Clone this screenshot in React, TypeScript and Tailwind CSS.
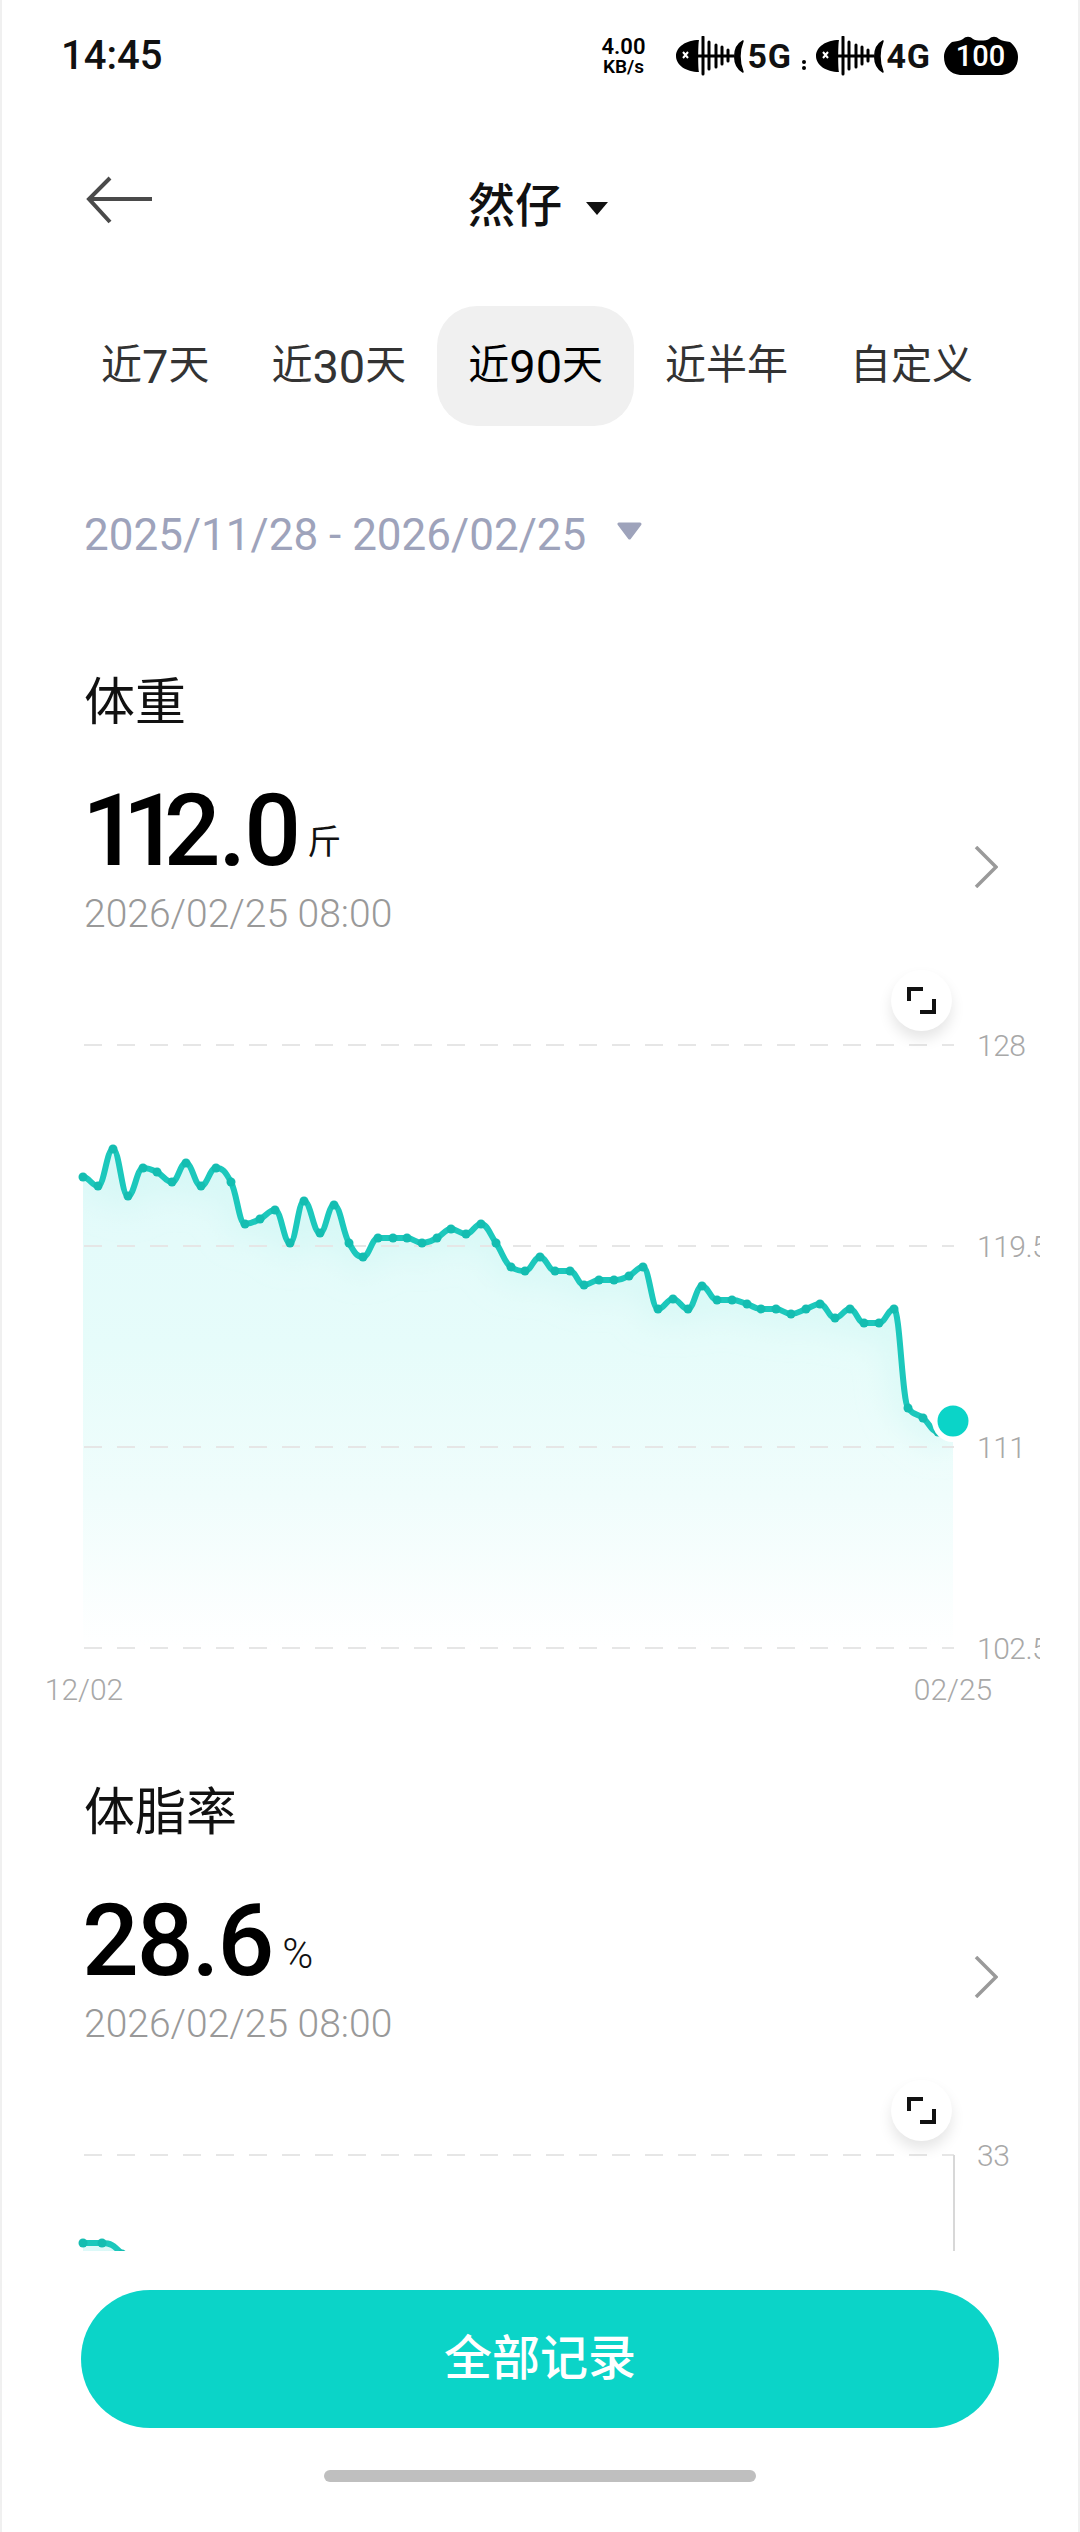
import React from "react";

type Pt = [number, number];

// page x, page y of every weight reading, read off the chart
const WEIGHT: Pt[] = [
  [83, 1176], [98, 1185], [113, 1148], [128, 1195], [143, 1167], [157, 1171], [172, 1181], [186, 1162],
  [201, 1185], [216, 1167], [231, 1181], [245, 1223], [260, 1218], [275, 1209], [290, 1242], [304, 1200],
  [320, 1232], [334, 1204], [349, 1242], [363, 1256], [378, 1237], [393, 1237], [407, 1237], [422, 1242],
  [437, 1237], [451, 1228], [466, 1233], [481, 1223], [496, 1242], [511, 1266], [525, 1270], [540, 1256],
  [555, 1270], [570, 1270], [584, 1284], [599, 1279], [614, 1279], [629, 1275], [643, 1266], [658, 1308],
  [673, 1298], [688, 1308], [702, 1285], [717, 1299], [732, 1299], [747, 1303], [761, 1308], [776, 1308],
  [791, 1313], [806, 1308], [820, 1303], [835, 1317], [850, 1308], [864, 1322], [879, 1322], [894, 1308],
  [908, 1407], [923, 1417], [938, 1431],
];

const FAT: Pt[] = [[83, 2243], [102, 2243], [122, 2254], [140, 2290]];

// smooth curve, flat at every peak and dip
function curve(pts: Pt[]) {
  const slope = (a: Pt, b: Pt) => (b[1] - a[1]) / (b[0] - a[0]);
  const t = pts.map((p, i) => {
    if (i === 0 || i === pts.length - 1) return 0;
    const s0 = slope(pts[i - 1], p);
    const s1 = slope(p, pts[i + 1]);
    if (s0 * s1 <= 0) return 0;
    const sign = s0 > 0 ? 1 : -1;
    return sign * Math.min(Math.abs(s0) * 2, Math.abs(s1) * 2, Math.abs(s0 + s1) / 2);
  });
  let d = `M${pts[0][0]} ${pts[0][1]}`;
  for (let i = 1; i < pts.length; i++) {
    const [x0, y0] = pts[i - 1];
    const [x1, y1] = pts[i];
    const h = (x1 - x0) * 0.42;
    d += `C${x0 + h} ${y0 + h * t[i - 1]} ${x1 - h} ${y1 - h * t[i]} ${x1} ${y1}`;
  }
  return d;
}

const FishBones = () => (
  <svg width="68" height="40" viewBox="0 0 68 40" className="shrink-0">
    <path d="M23 4C10 4 0 11 0 20s10 16 23 16c-1-4-1-28 0-32Z" fill="#000" />
    <path d="M7 16l5 6M12 16l-5 6" stroke="#fff" strokeWidth="2" />
    <path d="M22 20H58" stroke="#000" strokeWidth="3" />
    <path d="M27 1V38M33 6V33M40 9V31M46 11V28M52 14V25" stroke="#000" strokeWidth="3" strokeLinecap="round" />
    <path d="M67 5C56 11 56 30 67 36C63 26 63 15 67 5Z" fill="#000" stroke="#000" strokeWidth="1.5" strokeLinejoin="round" />
  </svg>
);

const StatusBar = () => (
  <div className="flex h-[112px] items-center pl-[61px]">
    <span className="text-[40px] leading-none font-medium text-[#111]">14:45</span>
    <div className="ml-[437px] flex w-[48px] flex-col items-center text-black">
      <span className="text-[22px] leading-[20px] font-semibold">4.00</span>
      <span className="text-[19px] leading-[19px] font-semibold">KB/s</span>
    </div>
    <div className="ml-[29px] flex items-center">
      <FishBones />
      <span className="ml-[3px] text-[34px] leading-none font-bold tracking-[0.02em] text-[#111]">5G</span>
    </div>
    <div className="ml-[10px] mt-[18px] flex flex-col gap-[2px]">
      <span className="size-[4px] rounded-full bg-black" />
      <span className="size-[4px] rounded-full bg-black" />
    </div>
    <div className="ml-[10px] flex items-center">
      <FishBones />
      <span className="ml-[3px] text-[34px] leading-none font-bold tracking-[0.02em] text-[#111]">4G</span>
    </div>
    <div className="relative ml-[13px] flex h-[40px] w-[74px] items-center justify-center">
      <svg width="74" height="40" viewBox="0 0 74 40" className="absolute inset-0">
        <path
          d="M8 6C12 5 16 5 19 3C22 0 26 0 29 3C32 5 42 5 45 3C48 0 52 0 55 3C58 5 62 5 66 6C71 10 74 15 74 21C74 31 68 38 58 39H16C6 38 0 31 0 21C0 15 3 10 8 6Z"
          fill="#000"
        />
      </svg>
      <span className="relative text-[29px] leading-none font-medium text-white">100</span>
    </div>
  </div>
);

const Header = () => (
  <div className="flex h-[186px] items-center pl-[86px]">
    <svg width="68" height="48" viewBox="0 0 68 48" className="mb-[10px] shrink-0">
      <path d="M66 23H4M24 2 3 23 24 46" fill="none" stroke="#4a4a4a" strokeWidth="4" />
    </svg>
    <span className="ml-[314px] text-[47px] leading-none font-medium text-[#111]">然仔</span>
    <svg width="22" height="13" viewBox="0 0 22 13" className="ml-[24px] mt-[6px] shrink-0">
      <path d="M0 0H22L11 13Z" fill="#111" />
    </svg>
  </div>
);

const RANGES = [
  { pre: "近", num: "7", post: "天" },
  { pre: "近", num: "30", post: "天" },
  { pre: "近", num: "90", post: "天" },
  { pre: "近半年", num: "", post: "" },
  { pre: "自定义", num: "", post: "" },
];

const RangeTabs = () => (
  <div className="mt-[8px] flex pl-[70px]">
    {RANGES.map((r) => (
      <div
        key={r.pre + r.num}
        className={
          r.num === "90"
            ? "flex h-[120px] items-center rounded-[40px] bg-[#f0f0f0] px-[31px] text-[41px] text-black"
            : "flex h-[120px] items-center px-[31px] text-[41px] text-[#333]"
        }
      >
        {r.pre}
        {r.num && <span className="text-[47px] leading-none">{r.num}</span>}
        {r.post}
      </div>
    ))}
  </div>
);

const DateRange = () => (
  <div className="mt-[78px] flex h-[62px] items-center pl-[84px]">
    <span className="text-[44px] leading-none text-[#9ea3bb]">2025/11/28 - 2026/02/25</span>
    <svg width="27" height="18" viewBox="0 0 27 18" className="ml-[30px] mb-[8px] shrink-0">
      <path d="M3 2H24L13.500 16Z" fill="#9ea3bb" stroke="#9ea3bb" strokeWidth="3" strokeLinejoin="round" />
    </svg>
  </div>
);

const ExpandButton = () => (
  <div className="absolute top-[-45px] left-[891px] flex size-[61px] items-center justify-center rounded-full bg-white shadow-[0_8px_14px_rgba(0,0,0,0.1)]">
    <svg width="29" height="27" viewBox="0 0 29 27">
      <path d="M2 14V2H16M27 12V25H13" fill="none" stroke="#111" strokeWidth="4" />
    </svg>
  </div>
);

type ChartProps = {
  id: string;
  top: number;
  points: Pt[];
  grid: string[];
  last?: Pt;
  edge?: boolean;
  from?: string;
  to?: string;
};

// y inside the svg = page y - top, so the readings stay in page numbers
const TrendChart = ({ id, top, points, grid, last, edge, from, to }: ChartProps) => {
  const line = curve(last ? [...points, last] : points);
  const endX = (last ?? points[points.length - 1])[0];
  const area = `${line}L${endX} ${top + 632}L${points[0][0]} ${top + 632}Z`;
  return (
    <div className="relative">
      <ExpandButton />
      <svg width="1040" height="700" viewBox={`0 ${top} 1040 700`} className="block">
        <defs>
          <linearGradient id={`${id}-fill`} gradientUnits="userSpaceOnUse" x1="0" y1={top + 130} x2="0" y2={top + 632}>
            <stop offset="0" stopColor="#e2fafa" />
            <stop offset="0.4" stopColor="#e6fcfa" />
            <stop offset="0.7" stopColor="#f0fdfc" />
            <stop offset="1" stopColor="#ffffff" />
          </linearGradient>
          <clipPath id={`${id}-clip`}>
            <path d={area} />
          </clipPath>
          <filter id={`${id}-blur`} x="-10%" y="-30%" width="120%" height="160%">
            <feGaussianBlur stdDeviation="16" />
          </filter>
        </defs>
        <path d={area} fill={`url(#${id}-fill)`} />
        <g clipPath={`url(#${id}-clip)`}>
          <path d={line} fill="none" stroke="#c9f5f1" strokeOpacity="0.5" strokeWidth="28" filter={`url(#${id}-blur)`} />
        </g>
        {grid.map((label, i) => {
          const y = top + 30 + i * 201;
          return (
            <g key={label}>
              <path d={`M84 ${y}H954`} stroke="#e6e6e6" strokeWidth="2" strokeDasharray="18 15" />
              <text x="977" y={y + 11} fontSize="30" fontWeight="300" letterSpacing="-0.5" fill="#a8a8a8">
                {label}
              </text>
            </g>
          );
        })}
        {edge && <path d={`M954 ${top + 30}V${top + 130}`} stroke="#d8d8d8" strokeWidth="2" />}
        <path d={line} fill="none" stroke="#1cc8bc" strokeWidth="6" strokeLinejoin="round" />
        {points.map(([x, y]) => (
          <circle key={x} cx={x} cy={y} r="4.500" fill="#14bdb1" />
        ))}
        {last && (
          <>
            <circle cx={last[0]} cy={last[1]} r="21" fill="#fff" />
            <circle cx={last[0]} cy={last[1]} r="15.500" fill="#0bd4c8" />
          </>
        )}
        {from && (
          <text x="84" y={top + 685} textAnchor="middle" fontSize="30" fontWeight="300" fill="#a8a8a8">
            {from}
          </text>
        )}
        {to && (
          <text x="953" y={top + 685} textAnchor="middle" fontSize="30" fontWeight="300" fill="#a8a8a8">
            {to}
          </text>
        )}
      </svg>
    </div>
  );
};

type MetricProps = {
  title: string;
  value: string;
  unit: string;
  children: React.ReactNode;
};

const Metric = ({ title, value, unit, children }: MetricProps) => (
  <section>
    <h2 className="h-[64px] pl-[84px] text-[51px] leading-[64px] font-normal text-[#111]">{title}</h2>
    <div className="mt-[48px] flex items-center justify-between pr-[82px] pl-[84px]">
      <div>
        <div className="flex h-[96px] items-end">
          <span className="-ml-[2px] text-[100px] leading-[96px] font-medium tracking-[-0.02em] text-black">
            {/* the 1 is a narrow figure in the original face */}
            {value.split("").map((ch, i) =>
              ch === "1" ? (
                <span key={i} className="tracking-[-0.16em]">
                  {ch}
                </span>
              ) : (
                ch
              ),
            )}
          </span>
          <span className={unit === "%" ? "mb-[14px] ml-[10px] text-[42px] leading-none font-light text-[#111]" : "mb-[20px] ml-[8px] text-[34px] leading-none text-[#111]"}>
            {unit}
          </span>
        </div>
        <div className="mt-[12px] h-[46px] text-[39px] leading-[46px] font-light text-[#999]">2026/02/25 08:00</div>
      </div>
      <svg width="24" height="42" viewBox="0 0 24 42" className="mt-[14px] shrink-0">
        <path d="M2 1 22 21 2 41" fill="none" stroke="#9a9a9a" strokeWidth="3.500" />
      </svg>
    </div>
    {children}
  </section>
);

export default function App() {
  return (
    <div className="flex h-[2532px] w-[1080px] flex-col overflow-hidden border-x-2 border-[#f0f0f0] bg-white font-['Roboto','Noto_Sans_CJK_SC',sans-serif]">
      <div className="-mx-[2px]">
        <StatusBar />
        <Header />
        <RangeTabs />
        <DateRange />
      </div>
      <div className="-mx-[2px] mt-[105px] h-[1580px] shrink-0 overflow-hidden">
        <Metric title="体重" value="112.0" unit="斤">
          <div className="mt-[78px]">
            <TrendChart id="weight" top={1014} points={WEIGHT} last={[953, 1420]} grid={["128", "119.5", "111", "102.5"]} from="12/02" to="02/25" />
          </div>
        </Metric>
        <div className="mt-[66px]">
          <Metric title="体脂率" value="28.6" unit="%">
            <div className="mt-[78px]">
              <TrendChart id="fat" top={2125} points={FAT} grid={["33"]} edge />
            </div>
          </Metric>
        </div>
      </div>
      <div className="-mx-[2px] px-[81px] pt-[39px]">
        <button className="flex h-[138px] w-full items-center justify-center rounded-full bg-[#0bd4c8] text-[48px] font-medium text-white">
          全部记录
        </button>
      </div>
      <div className="mt-[42px] flex justify-center">
        <div className="h-[12px] w-[432px] rounded-full bg-[#bfbfbf]" />
      </div>
    </div>
  );
}
